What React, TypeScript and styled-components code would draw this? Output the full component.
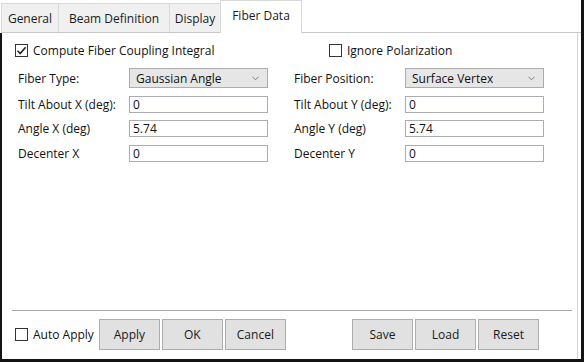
import styled, { createGlobalStyle } from "styled-components";

const GlobalStyle = createGlobalStyle`
  html, body {
    margin: 0;
    padding: 0;
    background: #fff;
  }
  body {
    font-family: "Open Sans", "Liberation Sans", sans-serif;
    font-size: 12px;
    color: #111;
  }
`;

const leftFields = [
  { label: "Tilt About X (deg):", value: "0" },
  { label: "Angle X (deg)", value: "5.74" },
  { label: "Decenter X", value: "0" },
];

const rightFields = [
  { label: "Tilt About Y (deg):", value: "0" },
  { label: "Angle Y (deg)", value: "5.74" },
  { label: "Decenter Y", value: "0" },
];

const tabs = [
  { name: "General", width: 58 },
  { name: "Beam Definition", width: 112 },
  { name: "Display", width: 52 },
  { name: "Fiber Data", width: 82, active: true },
];

const CheckBox = ({ checked }: { checked?: boolean }) => (
  <Box>
    {checked && (
      <svg width="11" height="11" viewBox="0 0 11 11">
        <path d="M1.5 5.8 L4.2 8.5 L9.6 2.2" fill="none" stroke="#222" strokeWidth="1.6" />
      </svg>
    )}
  </Box>
);

const App = () => {
  return (
    <>
      <GlobalStyle />
      <Window>
        <TabStrip>
          {tabs.map((t) => (
            <Tab key={t.name} $width={t.width} $active={t.active}>
              {t.name}
            </Tab>
          ))}
          <TabFill />
        </TabStrip>
        <Panel>
          <CheckRow>
            <CheckLabel>
              <CheckBox checked />
              Compute Fiber Coupling Integral
            </CheckLabel>
            <CheckLabel>
              <CheckBox />
              Ignore Polarization
            </CheckLabel>
          </CheckRow>
          <Form>
            <Label>Fiber Type:</Label>
            <Select>
              Gaussian Angle
              <Chevron />
            </Select>
            <span />
            <Label>Fiber Position:</Label>
            <Select>
              Surface Vertex
              <Chevron />
            </Select>
            {leftFields.map((f, i) => (
              <FieldPair key={f.label}>
                <Label>{f.label}</Label>
                <Input>{f.value}</Input>
                <span />
                <Label>{rightFields[i].label}</Label>
                <Input>{rightFields[i].value}</Input>
              </FieldPair>
            ))}
          </Form>
          <Footer>
            <Separator />
            <ButtonBar>
              <ButtonGroup>
                <AutoApply>
                  <CheckBox />
                  Auto Apply
                </AutoApply>
                <Button>Apply</Button>
                <Button>OK</Button>
                <Button>Cancel</Button>
              </ButtonGroup>
              <ButtonGroup>
                <Button>Save</Button>
                <Button>Load</Button>
                <Button>Reset</Button>
              </ButtonGroup>
            </ButtonBar>
          </Footer>
        </Panel>
      </Window>
    </>
  );
};

const Chevron = () => (
  <ChevronIcon width="7" height="5" viewBox="0 0 7 5">
    <path d="M0.5 0.8 L3.5 3.8 L6.5 0.8" fill="none" stroke="#7a7a7a" strokeWidth="1" />
  </ChevronIcon>
);

const Window = styled.div`
  width: 581px;
  height: 359px;
  display: flex;
  flex-direction: column;
  border-right: 3px solid #141414;
  border-bottom: 3px solid #141414;
  background: #fff;
`;

const TabStrip = styled.div`
  height: 33px;
  display: flex;
  align-items: flex-end;
  padding-left: 2px;
  box-sizing: border-box;
`;

const Tab = styled.div<{ $width: number; $active?: boolean }>`
  width: ${(p) => p.$width}px;
  height: ${(p) => (p.$active ? 33 : 30)}px;
  box-sizing: border-box;
  display: flex;
  align-items: center;
  justify-content: center;
  padding-bottom: ${(p) => (p.$active ? 3 : 0)}px;
  background: ${(p) => (p.$active ? "#fff" : "#f0f0f0")};
  border: 1px solid #d9d9d9;
  border-bottom: ${(p) => (p.$active ? "none" : "1px solid #c8c8c8")};
  margin-left: -1px;
  white-space: nowrap;
  color: #1a1a1a;
`;

const TabFill = styled.div`
  flex: 1;
  align-self: stretch;
  border-bottom: 1px solid #c8c8c8;
`;

const Panel = styled.div`
  flex: 1;
  display: flex;
  flex-direction: column;
  border-left: 2px solid #141414;
  border-right: 1px solid #d4d4d4;
  margin-right: 3px;
  padding-left: 1px;
  box-sizing: border-box;
`;

const CheckRow = styled.div`
  display: grid;
  grid-template-columns: 314px auto;
  padding: 6px 0 0 12px;
  height: 23px;
`;

const CheckLabel = styled.label`
  display: flex;
  align-items: center;
  gap: 5px;
  white-space: nowrap;
`;

const AutoApply = styled(CheckLabel)`
  margin-right: 3px;
`;

const Box = styled.span`
  width: 13px;
  height: 13px;
  box-sizing: border-box;
  border: 1px solid #333;
  background: #fff;
  display: flex;
  align-items: center;
  justify-content: center;
  flex: none;
`;

const Form = styled.div`
  display: grid;
  grid-template-columns: 111px 139px 26px 111px 139px;
  grid-auto-rows: 17px;
  grid-template-rows: 20px;
  row-gap: 7.5px;
  padding: 6px 0 0 15px;
  align-items: center;
`;

const FieldPair = styled.div`
  display: contents;
`;

const Label = styled.span`
  white-space: nowrap;
`;

const Select = styled.div`
  height: 20px;
  box-sizing: border-box;
  border: 1px solid #acacac;
  background: #e6e6e6;
  display: flex;
  align-items: center;
  justify-content: space-between;
  padding: 0 8px 0 6px;
`;

const ChevronIcon = styled.svg`
  flex: none;
`;

const Input = styled.div`
  height: 17px;
  box-sizing: border-box;
  border: 1px solid #abadb3;
  background: #fff;
  display: flex;
  align-items: center;
  padding-left: 3px;
`;

const Footer = styled.div`
  margin-top: auto;
  padding: 0 5px 9px 9px;
`;

const Separator = styled.div`
  height: 1px;
  background: #a8a8a8;
`;

const ButtonBar = styled.div`
  display: flex;
  justify-content: space-between;
  align-items: center;
  margin-top: 8px;
  padding-left: 3px;
  padding-right: 33px;
`;

const ButtonGroup = styled.div`
  display: flex;
  align-items: center;
  gap: 2px;
`;

const Button = styled.div`
  width: 61px;
  height: 31px;
  box-sizing: border-box;
  border: 1px solid #adadad;
  background: #e1e1e1;
  display: flex;
  align-items: center;
  justify-content: center;
  color: #1a1a1a;
`;

export default App;
